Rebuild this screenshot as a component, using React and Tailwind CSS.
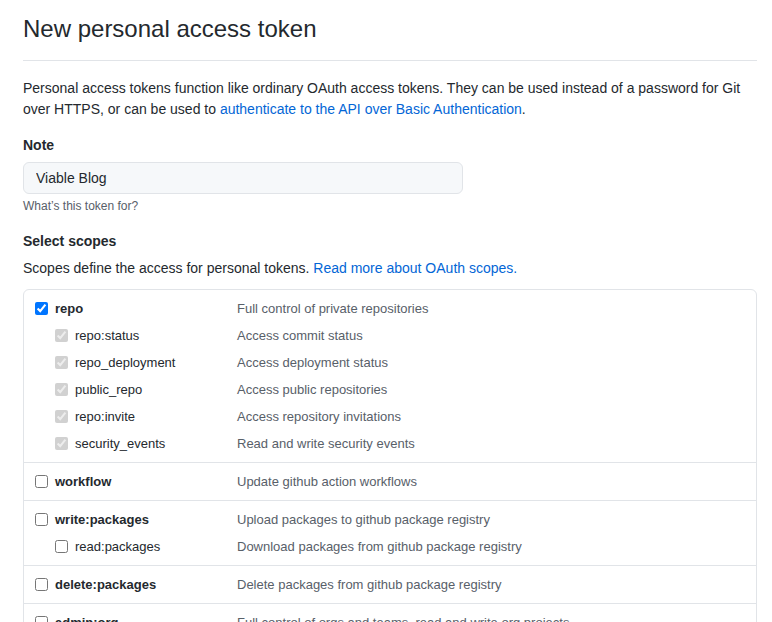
import React from "react";

const scopeGroups = [
  {
    name: "repo",
    desc: "Full control of private repositories",
    checked: true,
    children: [
      { name: "repo:status", desc: "Access commit status" },
      { name: "repo_deployment", desc: "Access deployment status" },
      { name: "public_repo", desc: "Access public repositories" },
      { name: "repo:invite", desc: "Access repository invitations" },
      { name: "security_events", desc: "Read and write security events" },
    ],
  },
  { name: "workflow", desc: "Update github action workflows", children: [] },
  {
    name: "write:packages",
    desc: "Upload packages to github package registry",
    children: [{ name: "read:packages", desc: "Download packages from github package registry" }],
  },
  { name: "delete:packages", desc: "Delete packages from github package registry", children: [] },
  {
    name: "admin:org",
    desc: "Full control of orgs and teams, read and write org projects",
    children: [
      { name: "write:org", desc: "Read and write org and team membership, read and write org projects" },
      { name: "read:org", desc: "Read org and team membership, read org projects" },
    ],
  },
];

const ScopeRow = ({ name, desc, checked, disabled, child }) => (
  <div className="flex items-center leading-[21px] text-[13px]">
    <label className={`flex items-center w-[202px] shrink-0 ${child ? "pl-5" : ""}`}>
      <input
        type="checkbox"
        defaultChecked={checked}
        disabled={disabled}
        className="m-0 w-[13px] h-[13px] shrink-0"
      />
      <span className={`ml-[7px] text-[#24292e] ${child ? "" : "font-bold"}`}>{name}</span>
    </label>
    <span className="text-[#586069]">{desc}</span>
  </div>
);

const App = () => {
  return (
    <div className="w-[772px] pl-[23px] pr-[15px] pt-[11px] text-[14px] text-[#24292e] bg-white" style={{ fontFamily: '"Liberation Sans", Arial, sans-serif' }}>
      <div className="pb-[13px] border-b border-[#e1e4e8]">
        <h1 className="text-[24px] leading-[36px] font-normal">New personal access token</h1>
      </div>

      <p className="mt-[17px] leading-[21px]">
        Personal access tokens function like ordinary OAuth access tokens. They can be used instead of a password for Git over HTTPS, or can be used to{" "}
        <a href="#" className="text-[#0366d6]">authenticate to the API over Basic Authentication</a>.
      </p>

      <div className="mt-[15px]">
        <div className="font-bold leading-[21px]">Note</div>
        <input
          type="text"
          defaultValue="Viable Blog"
          className="mt-[6px] w-[440px] h-[32px] px-3 text-[14px] bg-[#f6f8fa] border border-[#e1e4e8] rounded-md text-[#24292e] outline-none"
        />
        <div className="mt-[3px] text-[12px] leading-[18px] text-[#586069]">What’s this token for?</div>
      </div>

      <div className="mt-[16px]">
        <div className="font-bold leading-[21px]">Select scopes</div>
        <p className="mt-[6px] leading-[21px]">
          Scopes define the access for personal tokens.{" "}
          <a href="#" className="text-[#0366d6]">Read more about OAuth scopes.</a>
        </p>

        <div className="mt-[10px] border border-[#e1e4e8] rounded-md">
          {scopeGroups.map((g, i) => (
            <div
              key={g.name}
              className={`pl-[11px] py-2 flex flex-col gap-[6px] ${i < scopeGroups.length - 1 ? "border-b border-[#e1e4e8]" : ""}`}
            >
              <ScopeRow name={g.name} desc={g.desc} checked={g.checked} />
              {g.children.map(c => (
                <ScopeRow key={c.name} name={c.name} desc={c.desc} checked={g.checked} disabled={g.checked} child />
              ))}
            </div>
          ))}
        </div>
      </div>
    </div>
  );
};

export default App;
